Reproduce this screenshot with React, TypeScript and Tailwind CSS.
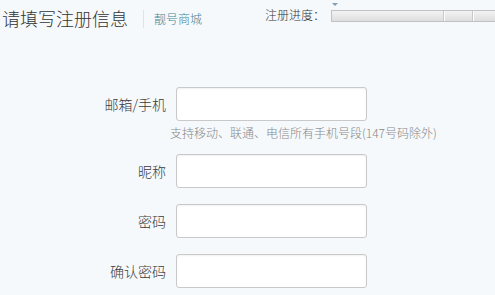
import React from "react";

const font = { fontFamily: '"Noto Sans CJK SC", "Noto Sans", sans-serif' };

function Row({ label, children }: { label: string; children?: React.ReactNode }) {
  return (
    <div className="flex items-start">
      <div className="w-[166px] h-[34px] shrink-0 flex items-center justify-end text-[14px] text-[#3a3a3a] font-light whitespace-nowrap">{label}</div>
      <div className="ml-[10px] flex flex-col">
        <input className="w-[191px] h-[34px] bg-white border border-[#c9c9c9] rounded-[3px] outline-none shadow-[inset_0_1px_2px_rgba(0,0,0,0.06)]" />
        {children}
      </div>
    </div>
  );
}

export default function App() {
  return (
    <div className="w-[495px] h-[295px] overflow-hidden bg-[#f5f9fc]" style={font}>
      <div className="flex items-start h-[36px] whitespace-nowrap">
        <div className="shrink-0 ml-[2px] mt-[7px] text-[18px] leading-[22px] text-[#333] font-light">请填写注册信息</div>
        <div className="shrink-0 ml-[15px] mt-[10px] w-px h-[18px] bg-[#dde3e6]" />
        <div className="shrink-0 ml-[10px] mt-[11px] text-[12px] leading-[16px] text-[#3f8596] font-light">靓号商城</div>
        <div className="shrink-0 ml-[63px] mt-[7px] text-[12px] leading-[16px] text-[#333] font-light">注册进度：</div>
        <div className="relative ml-[6px] mt-[10px] shrink-0">
          <div className="absolute left-[1px] top-[-7px] w-0 h-0 border-l-[3px] border-r-[3px] border-t-[3px] border-l-transparent border-r-transparent border-t-[#7f9db3]" />
          <div className="flex w-[170px] h-[12px] border border-[#c2c2c2] bg-gradient-to-b from-[#f3f3f3] to-[#dedede]">
            <div className="w-[112px] h-full border-r border-[#c8c8c8]" />
            <div className="w-[29px] h-full border-l border-white border-r border-r-[#c8c8c8]" />
            <div className="flex-1 h-full border-l border-white" />
          </div>
        </div>
      </div>
      <div className="mt-[51px] flex flex-col">
        <Row label="邮箱/手机">
          <div className="mt-[4px] -ml-[6px] text-[12px] leading-[16px] text-[#888] font-light whitespace-nowrap">
            支持移动、联通、电信所有手机号段(147号码除外)
          </div>
        </Row>
        <div className="mt-[13px]">
          <Row label="昵称" />
        </div>
        <div className="mt-[16px]">
          <Row label="密码" />
        </div>
        <div className="mt-[16px]">
          <Row label="确认密码" />
        </div>
      </div>
    </div>
  );
}
